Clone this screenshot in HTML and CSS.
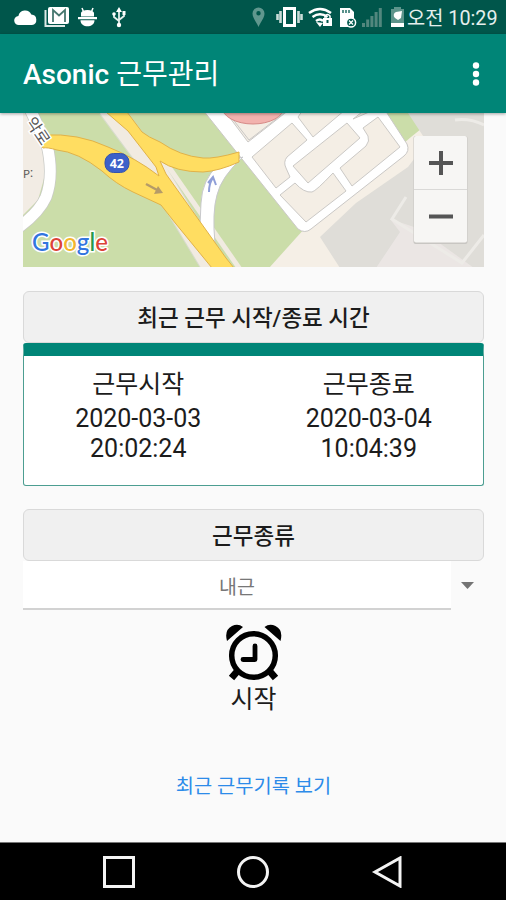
FILE: index.html
```html
<!DOCTYPE html>
<html lang="ko">
<head>
<meta charset="utf-8">
<title>Asonic 근무관리</title>
<link rel="stylesheet" href="styles.css">
</head>
<body>
<div class="screen">
  <div class="statusbar">
    <svg class="status-icons" viewBox="0 0 406 34" width="406" height="34">
      <path fill="#fff" d="M19 25a4.500 4.500 0 0 1-.6-9A6.800 6.800 0 0 1 31.300 14.500a5.300 5.300 0 0 1 .7 10.500z"/>
      <path fill="none" stroke="#dce9e6" stroke-width="2" d="M45.500 10v16H65"/>
      <rect x="48" y="7" width="21" height="17" rx="2" fill="#fff"/>
      <path fill="none" stroke="#46776f" stroke-width="1.800" d="M53 22V10l6 5.500 6-5.500v12"/>
      <g fill="#fff"><path d="M81 16.500V13a6.500 3 0 0 1 13 0v3.500zM78 17h19v2.300H78zM80.500 20.300h14c0 8-14 8-14 0z"/><path stroke="#fff" stroke-width="1.500" d="M82 8l2 5M93 8l-2 5"/></g>
      <g fill="none" stroke="#e4efec" stroke-width="1.800"><path d="M119 10v14M114 14v3l5 4M124 13v3l-5 4"/></g>
      <path fill="#fff" d="M116 12l3-5 3 5zM122.500 11h3v4h-3z"/><circle cx="114" cy="14" r="1.800" fill="#fff"/><circle cx="119" cy="25" r="2.200" fill="#fff"/>
      <path fill="#60978e" fill-rule="evenodd" d="M258.500 27c-2-5-6-9-6-13.500a6 6 0 0 1 12 0c0 4.500-4 8.500-6 13.500zm0-16a2.200 2.200 0 1 0 0 4.400 2.200 2.200 0 0 0 0-4.400z"/>
      <rect x="284.500" y="8.500" width="10" height="17" fill="none" stroke="#fff" stroke-width="3"/>
      <path stroke="#c9dcd8" stroke-width="2.600" d="M280.500 11v12M277.500 14v6M298.500 11v12M301.500 14v6"/>
      <g fill="none" stroke="#fff" stroke-width="2.500"><path d="M309 13q11-8 22 0M312.500 17q7.500-5.500 15 0M316 21q4-3 7 0"/></g><path fill="#fff" d="M316 22l4 5 3-4z"/>
      <rect x="323" y="18" width="9" height="8" fill="#fff"/><path fill="none" stroke="#fff" stroke-width="1.500" d="M325 18v-2q2.500-3 5 0v2"/><rect x="326.500" y="20" width="2" height="3" fill="#00584d"/>
      <path fill="#fff" d="M340 8h10l4 4v15h-14z"/><path stroke="#00584d" stroke-width="1.300" d="M343 10v3M346 10v3M349 10v3"/>
      <circle cx="351" cy="22.500" r="4.600" fill="#00584d" stroke="#fff" stroke-width="1.500"/><path stroke="#fff" stroke-width="1.300" d="M349 20.500l4 4m0-4l-4 4"/>
      <g fill="#52877e"><path d="M362 23h3v4h-3zM366.200 19.500h3V27h-3zM370.400 16h3v11h-3zM374.600 12h3v15h-3zM378.800 8h3v19h-3z"/></g>
      <path fill="#5d948b" d="M391 9h3V7h7v2h3v14h-13z"/><path fill="#fff" d="M391 23h13v4h-13zM395 18a3.500 3.500 0 0 1 1-6l6-1-1 7-3 2z"/>
    </svg>
    <span class="clock">오전 10:29</span>
  </div>
  <header class="appbar">
    <h1 class="title">Asonic <span class="title-ko">근무관리</span></h1>
    <svg width="10" height="24" viewBox="0 0 10 24" fill="#fff"><circle cx="5" cy="3.500" r="3.200"/><circle cx="5" cy="12" r="3.200"/><circle cx="5" cy="20.500" r="3.200"/></svg>
  </header>
  <main class="content">
    <div class="map">
      <svg viewBox="23 113 461 154" width="461" height="154">
        <rect x="23" y="113" width="461" height="154" fill="#cbdda9"/>
        <path fill="#f2ece4" d="M23 113h10l10 32 2 30-7 25-15 15z"/>
        <path fill="none" stroke="#c9cac6" stroke-width="12.500" d="M29 107l18 38q7 30-1 52-8 18-34 35"/>
        <path fill="none" stroke="#fff" stroke-width="11" d="M29 107l18 38q7 30-1 52-8 18-34 35"/>
        <path fill="none" stroke="#d7dccb" stroke-width="24" d="M109 107l43 58 68 113"/>
        <path fill="none" stroke="#f1ebe1" stroke-width="22" d="M109 107l43 58 68 113"/>
        <path fill="none" stroke="#f1ebe1" stroke-width="5" d="M166 163l78 112"/>
        <path fill="#f5efe6" d="M305 228l106-91 30-24h43v155H269z"/>
        <path fill="#f4eee5" d="M222 113h100l-72 52z"/>
        <path fill="#dfddd8" d="M408 113h76v155H340l-20-31 36-34 52-36 19-25z"/>
        <path fill="#ebe6e4" d="M376 268l24-36-10-13 30 10 54 39z"/>
        <path fill="none" stroke="#edebe7" stroke-width="3" d="M406 197l-14 22 70 44 22-28M455 120q15-2 29 5"/>
        <path fill="#fff" stroke="#cac8c6" d="M203 110l39 49 56 70q7 5 13 0l93-73q6-5 3-12l-22-34H289l-41 32-24-32z"/>
        <path fill="#f4eee5" stroke="#cac8c6" d="M228 113l21 27 35-27z"/>
        <g fill="#f4eee5" stroke="#cbc9c6" stroke-linejoin="round">
          <path d="M252 157l40-34 15 17-20 17q-4 5-1 11l4 9-14 11zM298 117l5-7h42l-32 27zM293 166l54-43 13 15-52 45zM280 195l15-12q9 10 17 9 4-1 21-19l13 18-40 31zM340 168l26-22q4-5 2-10l-5-8 15-11 22 30-48 39zM353 119l13-10h10z"/>
        </g>
        <ellipse cx="253" cy="107" rx="31" ry="17" fill="#f2b2ae" stroke="#d68b88"/>
        <path fill="#fff" stroke="#c8c9cc" d="M218 165q-16 15-17 38l-1 22 15 19q-3-32 2-49 4-18 26-38z"/>
        <path fill="none" stroke="#8f9fd8" stroke-width="2" d="M209 192q0-9 4-14M208 183l5-6 3 8"/>
        <path fill="#ffdd61" stroke="#e1b248" stroke-linejoin="round" d="M106 112h21l15 20q6 5 18 10 20 14 43 16 12 1 36-6v10q-20 9-36 10-27 0-43-11l6 13 60 84 8 10h-22l-36-44-15-19-28-13q-17-8-31-21-24-19-45-21-10-3-14-2l-4-6 5-7q34-2 64 12 28 11 51 29l-3-9-28-36z"/>
        <path fill="none" stroke="#b59b68" stroke-width="2.500" d="M146 184l13 7"/><path fill="#b59b68" d="M158 186l5 7-9 1z"/>
        <rect x="105" y="153.500" width="24" height="19" rx="8.500" fill="#3d61c9" stroke="#3453ac"/>
        <text class="route" x="116.800" y="167.500" text-anchor="middle">42</text>
        <text class="road-name" transform="translate(25 122) rotate(56)">악로</text>
        <text class="place-name" x="23" y="178">P:</text>
        <text class="google" x="32" y="251" textLength="76"><tspan fill="#3275df">G</tspan><tspan fill="#dc4337">o</tspan><tspan fill="#f4b52d">o</tspan><tspan fill="#3275df">g</tspan><tspan fill="#26994d">l</tspan><tspan fill="#dc4337">e</tspan></text>
        <rect x="413.500" y="136" width="54" height="108" rx="2" fill="#c8c6c2"/>
        <rect x="414" y="136" width="53" height="106.500" rx="2" fill="#f7f6f4"/>
        <path stroke="#dad9d7" d="M414 189.500h53"/>
        <path stroke="#555" stroke-width="4" d="M429 163h24M441 151v24M429 216.500h24"/>
      </svg>
    </div>
    <div class="heading">최근 근무 시작/종료 시간</div>
    <section class="card">
      <div class="record"><span class="record-name">근무시작</span><span>2020-03-03</span><span>20:02:24</span></div>
      <div class="record"><span class="record-name">근무종료</span><span>2020-03-04</span><span>10:04:39</span></div>
    </section>
    <div class="heading type-heading">근무종류</div>
    <div class="select">
      <div class="select-value">내근</div>
      <svg width="13" height="7" viewBox="0 0 13 7"><path d="M0 0h13L6.500 7z" fill="#747474"/></svg>
    </div>
    <div class="start">
      <svg width="58" height="58" viewBox="225 624 58 58">
        <path d="M227 641q-3-11 5-15 6-3 11 1zM280.500 641q3-11-5-15-6-3-11 1z"/>
        <circle cx="253.500" cy="655.500" r="21.800" fill="none" stroke="#000" stroke-width="5.500"/>
        <path fill="none" stroke="#000" stroke-width="7" d="M237.500 671l-6 7M269.500 671l6 7"/>
        <path fill="none" stroke="#000" stroke-width="4.800" stroke-linecap="round" stroke-linejoin="round" d="M255 646v13.500h-12"/>
      </svg>
      <span>시작</span>
    </div>
    <a class="history">최근 근무기록 보기</a>
  </main>
  <nav class="navbar">
    <svg width="32" height="32" viewBox="0 0 32 32"><rect x="1.500" y="1.500" width="29" height="29"/></svg>
    <svg width="32" height="32" viewBox="0 0 32 32"><circle cx="16" cy="16" r="14.500"/></svg>
    <svg width="32" height="32" viewBox="0 0 32 32"><path d="M29 2v28L4 16z"/></svg>
  </nav>
</div>
</body>
</html>
```
FILE: styles.css
```css
* { box-sizing: border-box; }
body { margin: 0; font-family: Roboto, "Noto Sans CJK KR", sans-serif; color: #1c1c1c; }
svg { display: block; flex: none; }
.screen { width: 506px; height: 900px; display: flex; flex-direction: column; background: #fafafa; overflow: hidden; }
.statusbar { height: 34px; flex: none; display: flex; background: #00564b; color: #e5efed; }
.clock { font-size: 19.800px; line-height: 37px; white-space: nowrap; margin-left: 1px; }
.appbar { height: 79px; flex: none; display: flex; align-items: center; justify-content: space-between; padding: 0 25px 0 23px; background: #008577; color: #fff; box-shadow: 0 1px 3px rgba(0,0,0,.35); z-index: 1; }
.title { margin: 3px 0 0; font-size: 28px; font-weight: 500; line-height: 40px; white-space: nowrap; }
.title-ko { font-weight: 400; }
.content { flex: 1; display: flex; flex-direction: column; padding: 0 22px 0 23px; }
.map { height: 154px; margin-bottom: 24px; overflow: hidden; }
.route { font: bold 12.500px "Open Sans", sans-serif; fill: #fff; }
.road-name { font: 16px "Noto Sans CJK KR", sans-serif; fill: #555; stroke: #fff; stroke-width: 3px; paint-order: stroke; }
.place-name { font: 11px "Noto Sans CJK KR", sans-serif; fill: #555; }
.google { font: 500 24px Lato, sans-serif; stroke: #fff; stroke-width: 3px; paint-order: stroke; }
.heading { height: 52px; flex: none; border: 1.500px solid #d9d9d9; border-radius: 6px; background: #f0f0f0; font-size: 22.500px; font-weight: 500; line-height: 52px; text-align: center; }
.card { height: 143px; flex: none; display: flex; padding-top: 12px; border: 1px solid #4c9e91; border-top: 13px solid #008577; border-radius: 3px; background: #fff; margin-bottom: 23px; }
.record { flex: 1; display: flex; flex-direction: column; align-items: center; font-size: 25px; line-height: 30px; }
.record-name { line-height: 34px; margin-bottom: 2px; }
.record + .record { padding-left: 2px; }
.select { height: 49px; display: flex; align-items: center; }
.select-value { width: 428px; height: 49px; margin-right: 10px; background: #fff; border-bottom: 2px solid #d2d2d2; color: #777; font-size: 19.500px; line-height: 54px; text-align: center; }
.start { margin-top: 14px; display: flex; flex-direction: column; align-items: center; font-size: 25px; line-height: 36px; }
.history { margin-top: 54px; text-align: center; color: #2c8be9; font-size: 19.800px; line-height: 30px; }
.navbar { height: 58px; flex: none; display: flex; align-items: center; justify-content: center; gap: 102px; background: #000; border-top: 1px solid #777; }
.navbar svg { fill: none; stroke: #f4f4f4; stroke-width: 3; }
```
